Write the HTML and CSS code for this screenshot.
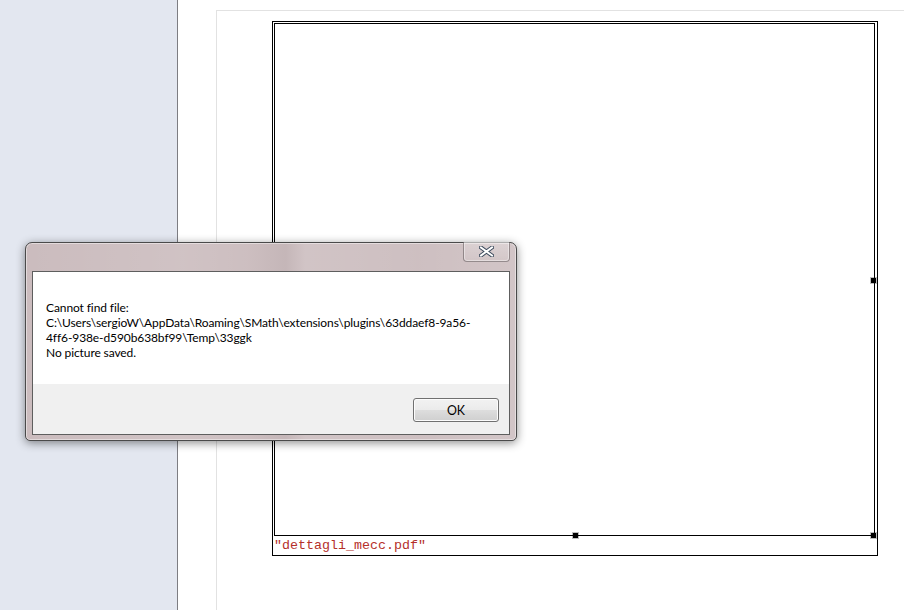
FILE: index.html
```html
<!DOCTYPE html>
<html>
<head>
<meta charset="utf-8">
<link rel="stylesheet" href="styles.css">
</head>
<body>
<div class="app">
  <aside class="sidebar"></aside>
  <main class="workspace">
    <div class="page">
      <div class="region">
        <div class="plot">
          <span class="handle h-right"></span>
          <span class="handle h-bottom"></span>
          <span class="handle h-corner"></span>
        </div>
        <div class="label">"dettagli_mecc.pdf"</div>
      </div>
    </div>
  </main>
</div>

<div class="dialog">
  <div class="titlebar">
    <button class="close" aria-label="Close">
      <svg width="15" height="11" viewBox="0 0 15 11">
        <path d="M2 1.5 L13 9.5 M13 1.5 L2 9.5" stroke="#3c4a5c" stroke-width="4" stroke-linecap="square" fill="none"/>
        <path d="M2 1.5 L13 9.5 M13 1.5 L2 9.5" stroke="#ffffff" stroke-width="2" stroke-linecap="square" fill="none"/>
      </svg>
    </button>
  </div>
  <div class="client">
    <div class="message">
      <div class="line">Cannot find file:</div>
      <div class="line">C:\Users\sergioW\AppData\Roaming\SMath\extensions\plugins\63ddaef8-9a56-</div>
      <div class="line">4ff6-938e-d590b638bf99\Temp\33ggk</div>
      <div class="line">No picture saved.</div>
    </div>
    <div class="footer">
      <button class="ok">OK</button>
    </div>
  </div>
</div>
</body>
</html>
```

FILE: styles.css
```css
html, body {
  margin: 0;
  padding: 0;
  width: 904px;
  height: 610px;
  overflow: hidden;
  background: #ffffff;
}

.app {
  display: flex;
  width: 904px;
  height: 610px;
}

.sidebar {
  width: 177px;
  flex: none;
  background: #e3e7f0;
  border-right: 1px solid #7d7d82;
}

.workspace {
  flex: 1;
  padding: 10px 0 0 38px;
  background: #ffffff;
}

.page {
  height: 100%;
  border-top: 1px solid #e2e2e2;
  border-left: 1px solid #e2e2e2;
  padding: 10px 0 0 55px;
  box-sizing: border-box;
}

.region {
  border: 1px solid #000;
  padding: 1px 2px 0 1px;
  width: 601px;
}

.plot {
  position: relative;
  height: 511px;
  border: 1px solid #000;
}

.handle {
  position: absolute;
  width: 5px;
  height: 5px;
  background: #000;
  box-shadow: 0 0 0 1px rgba(0,0,0,0.25);
}
.h-right { right: -2px; top: 254px; }
.h-bottom { left: 298px; bottom: -3px; }
.h-corner { right: -2px; bottom: -3px; }

.label {
  height: 19px;
  line-height: 19px;
  font-family: "Liberation Mono", "Courier New", monospace;
  font-size: 13.33px;
  color: #b5302a;
}

/* Dialog */
.dialog {
  position: absolute;
  left: 25px;
  top: 242px;
  width: 478px;
  height: 164px;
  padding: 28px 6px 5px 6px;
  border: 1px solid #4a4a4a;
  border-radius: 7px 7px 5px 5px;
  background:
    linear-gradient(90deg,
      rgba(255,255,255,0) 0%,
      rgba(255,255,255,0.10) 32%,
      rgba(255,255,255,0.04) 45%,
      rgba(0,0,0,0.03) 53%,
      rgba(255,255,255,0.12) 57%,
      rgba(255,255,255,0.05) 80%,
      rgba(255,255,255,0.14) 100%),
    #cbbcbe;
  box-shadow: 0 2px 10px rgba(0,0,0,0.45), inset 0 0 0 1px rgba(255,255,255,0.45);
  font-family: "Lato", "Noto Sans", sans-serif;
}

.titlebar {
  position: absolute;
  left: 0;
  top: 0;
  right: 0;
  height: 28px;
}

.close {
  position: absolute;
  top: -1px;
  right: 6px;
  width: 47px;
  height: 20px;
  padding: 0;
  border: 1px solid rgba(90,80,82,0.55);
  border-top: none;
  border-radius: 0 0 4px 4px;
  background: linear-gradient(180deg, rgba(255,255,255,0.25), rgba(255,255,255,0.05));
  box-shadow: inset 0 0 0 1px rgba(255,255,255,0.4);
  display: flex;
  align-items: center;
  justify-content: center;
}

.client {
  height: 162px;
  border: 1px solid #5e5e5e;
  background: #ffffff;
  display: flex;
  flex-direction: column;
}

.message {
  height: 84px;
  padding: 28px 0 0 13px;
  font-size: 12px;
  letter-spacing: -0.1px;
  line-height: 15px;
  color: #000;
}

.line {
  height: 15px;
}

.footer {
  flex: 1;
  background: #f0f0f0;
  display: flex;
  justify-content: flex-end;
  align-items: flex-start;
  padding: 14px 10px 0 0;
}

.ok {
  width: 86px;
  height: 24px;
  border: 1px solid #707070;
  border-radius: 3px;
  background: linear-gradient(180deg, #f2f2f2 0%, #ebebeb 48%, #dddddd 52%, #cfcfcf 100%);
  box-shadow: inset 0 0 0 1px #fcfcfc;
  font-family: "Lato", "Noto Sans", sans-serif;
  font-size: 12.4px;
  color: #000;
  padding: 0;
}
```
